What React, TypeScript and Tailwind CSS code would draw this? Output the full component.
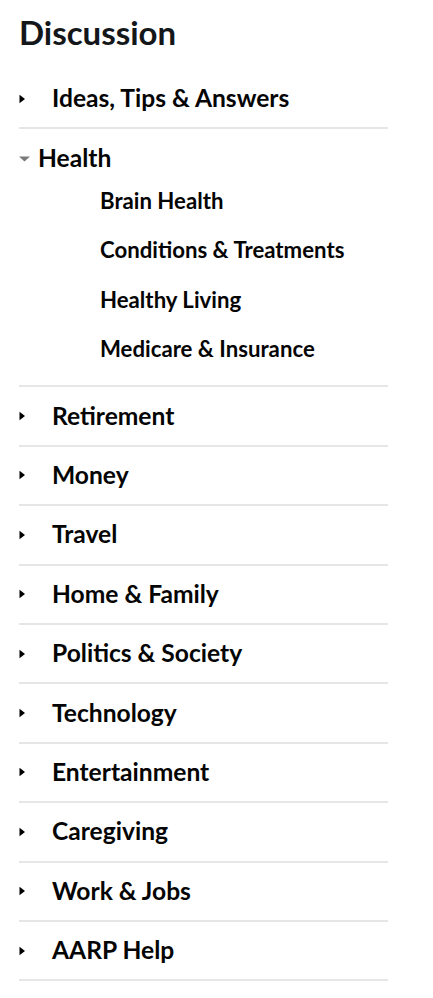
const topics = [
  "Retirement",
  "Money",
  "Travel",
  "Home & Family",
  "Politics & Society",
  "Technology",
  "Entertainment",
  "Caregiving",
  "Work & Jobs",
  "AARP Help",
];

const healthTopics = ["Brain Health", "Conditions & Treatments", "Healthy Living", "Medicare & Insurance"];

function RightCaret() {
  return (
    <svg width="7" height="10" viewBox="0 0 7 10" className="shrink-0">
      <path d="M0.5 0.8 L6 5 L0.5 9.2 Z" fill="#000" />
    </svg>
  );
}

function DownCaret() {
  return (
    <svg width="11" height="6" viewBox="0 0 11 6" className="shrink-0">
      <path d="M0 0.5 L11 0.5 L5.5 5.5 Z" fill="#7a7a7a" />
    </svg>
  );
}

function TopicRow({ label }: { label: string }) {
  return (
    <li className="h-[59.4px] flex items-center border-b-2 border-[#e6e6e6]">
      <span className="w-[33px] flex items-center">
        <RightCaret />
      </span>
      <span className="text-[24.6px] font-bold text-[#050505]">{label}</span>
    </li>
  );
}

export default function App() {
  return (
    <div className="w-[433px] h-[998px] bg-white px-[19px] pt-[10px]" style={{ fontFamily: "Lato, 'Open Sans', sans-serif" }}>
      <h1 className="text-[33px] font-bold text-[#14171a] leading-[44px]">Discussion</h1>
      <ul className="w-[369px] mt-[16px]">
        <li className="h-[59.4px] flex items-center border-b-2 border-[#e6e6e6]">
          <span className="w-[33px] flex items-center">
            <RightCaret />
          </span>
          <span className="text-[24.6px] font-bold text-[#050505]">Ideas, Tips &amp; Answers</span>
        </li>
        <li className="border-b-2 border-[#e6e6e6] pb-[11.5px]">
          <div className="h-[59px] flex items-center">
            <span className="w-[19px] flex items-center">
              <DownCaret />
            </span>
            <span className="text-[24.6px] font-bold text-[#050505]">Health</span>
          </div>
          <ul className="pl-[81px] -mt-[12.5px]">
            {healthTopics.map((t) => (
              <li key={t} className="h-[49.5px] flex items-center text-[22.2px] font-bold text-[#050505]">
                {t}
              </li>
            ))}
          </ul>
        </li>
        {topics.map((t) => (
          <TopicRow key={t} label={t} />
        ))}
      </ul>
    </div>
  );
}
